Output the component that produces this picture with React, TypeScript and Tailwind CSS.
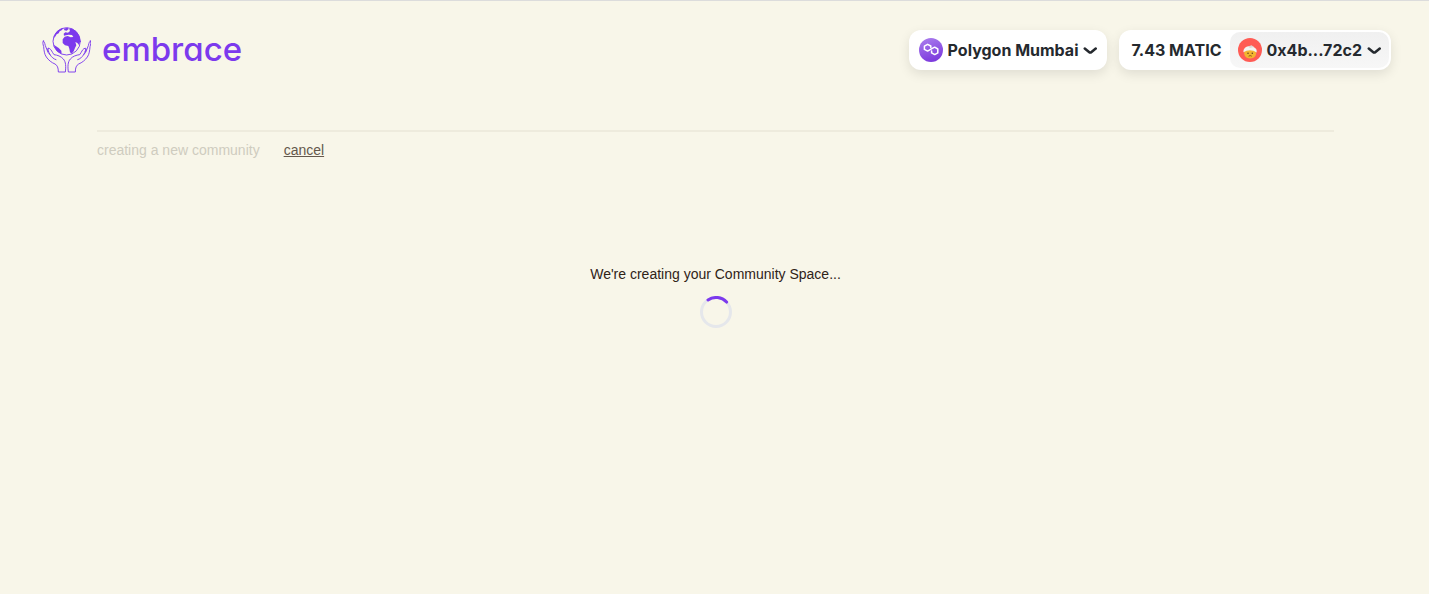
function Chevron() {
  return (
    <svg width="14" height="7" viewBox="0 0 14 7" fill="none" aria-hidden="true">
      <path
        d="M12.75 1.54L8.516 5.004C7.78 5.607 6.72 5.607 5.984 5.004L1.75 1.54"
        stroke="currentColor"
        strokeWidth="2.5"
        strokeLinecap="round"
        strokeLinejoin="round"
      />
    </svg>
  );
}

function Logo() {
  return (
    <svg width="50" height="48" viewBox="15 17 150 144" fill="none" stroke="#7c3aed" strokeWidth="2.8" strokeLinejoin="round" strokeLinecap="round" aria-hidden="true">
      <circle cx="92" cy="63" r="41" />
      <g fill="#7c3aed" stroke="none">
        <path d="M57 41C63 31 72 25 82 23L78 29L71 33L68 39L62 42L57 50L53 53Z" />
        <path d="M84 25L94 22L98 26L92 31L85 30Z" />
        <path d="M53 73L60 78L68 83L76 91L77 101C64 96 56 86 53 73Z" />
        <path d="M83 40L88 36L96 37L102 32L100 26L108 25C124 32 132 45 133 62L129 74L124 68L118 65L121 75L117 83L113 93L107 100L102 96L100 85L97 77L87 75L80 68L80 57L86 49L95 47L104 51L112 50L108 44L98 43L90 45L84 46Z" />
      </g>
      <g id="hand">
        <path d="M22 62C19 66 21 72 23 79C24 91 25 101 31 110C37 119 47 127 57 131C64 135 67 142 67 155L88 155C90 139 90 125 82 116C75 108 64 104 54 103L50 97C46 90 43 84 38 84C34 86 37 93 42 103L36 96L28 76C26 67 24 62 22 62Z" />
        <path d="M42 103C47 111 53 116 60 118M38 84C34 82 33 87 37 94" />
      </g>
      <use href="#hand" transform="translate(185 0) scale(-1 1)" />
    </svg>
  );
}

function PolygonIcon() {
  return (
    <svg width="24" height="24" viewBox="0 0 24 24" fill="none" aria-hidden="true">
      <defs>
        <linearGradient id="poly" x1="8" y1="0" x2="16" y2="24" gradientUnits="userSpaceOnUse">
          <stop stopColor="#a779ec" />
          <stop offset="1" stopColor="#7a37dc" />
        </linearGradient>
      </defs>
      <circle cx="12" cy="12" r="12" fill="url(#poly)" />
      <path
        d="M11.8 9.4V8L8.6 6.3L5.4 8.1V11.4L8.6 13.1L11.2 11.6L13.3 10.4L15.7 9.2L18.8 11V14.9L15.7 16.6L12.6 14.9V13"
        stroke="#fff"
        strokeWidth="1.5"
        strokeLinejoin="round"
        strokeLinecap="round"
      />
    </svg>
  );
}

function Avatar() {
  return (
    <svg width="24" height="24" viewBox="0 0 24 24" aria-hidden="true">
      <circle cx="12" cy="12" r="12" fill="#ff5c55" />
      <path d="M6.3 13.5C5.5 18 8.5 20.4 12.2 20.4C16 20.4 18.8 18 18 13.5L12 10Z" fill="#f3b52f" />
      <path d="M5.5 14.3C5 10.8 8 8 12 8C13.8 8 15 8.5 16 9.2C18.2 10.2 19.1 12 18.6 14.5L15.5 12.8L12 12.2L8.5 12.8Z" fill="#f4f4f2" />
      <path d="M10 8.4L13.5 7.2L16 9L12 10Z" fill="#ded8d6" />
      <circle cx="10" cy="15.3" r=".75" fill="#5b3b20" />
      <circle cx="14.3" cy="15.3" r=".75" fill="#5b3b20" />
      <path d="M10.6 18.2Q12.2 17 13.8 18.2" stroke="#8b4a1c" strokeWidth=".9" fill="none" />
    </svg>
  );
}

export default function App() {
  return (
    <div className="min-h-screen border-t border-[#dcdcdc] bg-[#f8f6e9] font-['Liberation_Sans',Arial,sans-serif] text-sm text-[#2f2318]">
      <header className="flex items-center justify-between pt-[25px] pr-[38px] pl-[41px]">
        <a href="#" className="flex items-start gap-[11px] text-[#7c3aed]">
          <Logo />
          <span className="font-[Inter,sans-serif] text-[33px] leading-[46px] font-medium [font-feature-settings:'cv11']">embrace</span>
        </a>
        <div className="flex gap-3 font-[Inter,sans-serif] text-base font-bold text-[#25292e]">
          <button className="flex h-10 items-center gap-[5px] rounded-xl bg-white px-2.5 shadow-[0_4px_12px_rgba(0,0,0,0.1)]">
            <PolygonIcon />
            Polygon Mumbai
            <Chevron />
          </button>
          <button className="flex h-10 items-center rounded-xl bg-white p-0.5 shadow-[0_4px_12px_rgba(0,0,0,0.1)]">
            <span className="pr-2 pl-2.5">7.43 MATIC</span>
            <span className="flex h-9 items-center gap-[5px] rounded-[10px] bg-linear-to-b from-[#f0f0f0] to-[#f7f7f7] px-2">
              <Avatar />
              0x4b...72c2
              <Chevron />
            </span>
          </button>
        </div>
      </header>
      <main className="pt-14 pr-[95px] pl-[97px]">
        <div className="flex gap-6 border-t-2 border-[#eeebdd] pt-2 leading-5">
          <p className="text-[#cfccbf]">creating a new community</p>
          <a href="#" className="text-[#64584c] underline">cancel</a>
        </div>
        <div role="status" className="mt-[104px] flex flex-col items-center gap-3 leading-5">
          <p>We're creating your Community Space...</p>
          <svg width="32" height="32" viewBox="0 0 32 32" fill="none" strokeWidth="3" aria-hidden="true">
            <circle cx="16" cy="16" r="14.5" stroke="#e5e7eb" />
            <path d="M8 3.9A14.5 14.5 0 0 1 26.6 6.1" stroke="#7c3aed" strokeLinecap="round" />
          </svg>
        </div>
      </main>
    </div>
  );
}
